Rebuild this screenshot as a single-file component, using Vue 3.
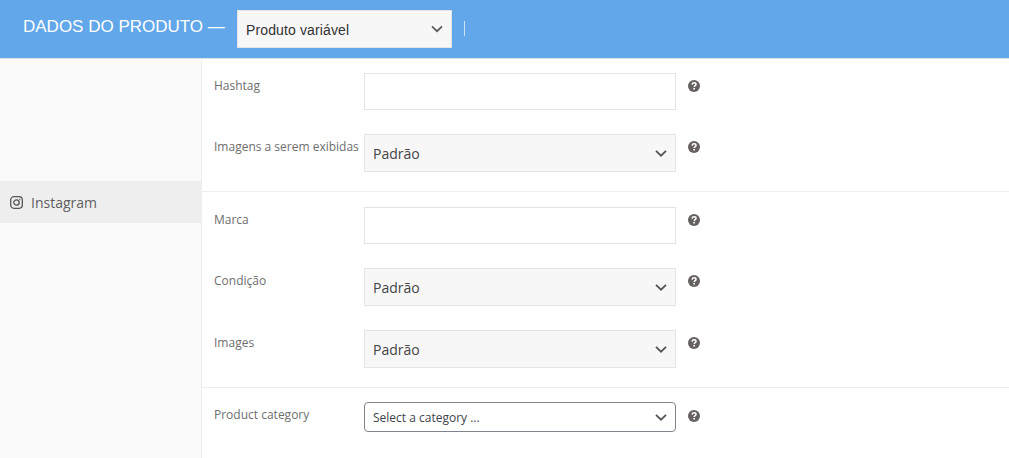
<script setup>
const groups = [
  [
    { label: 'Hashtag', type: 'input' },
    { label: 'Imagens a serem exibidas', type: 'select', value: 'Padrão' },
  ],
  [
    { label: 'Marca', type: 'input' },
    { label: 'Condição', type: 'select', value: 'Padrão' },
    { label: 'Images', type: 'select', value: 'Padrão' },
  ],
  [
    { label: 'Product category', type: 'category', value: 'Select a category ...' },
  ],
]
</script>

<template>
  <div class="page">
    <header class="bar">
      <span class="title">DADOS DO PRODUTO —</span>
      <div class="type-select">
        <span>Produto variável</span>
        <svg class="chev" width="12" height="8" viewBox="0 0 12 8"><path d="M1 1.4 6 6.2 11 1.4" fill="none" stroke="#5c5c5c" stroke-width="1.8"/></svg>
      </div>
      <span class="sep"></span>
    </header>
    <div class="body">
      <aside class="side">
        <div class="tab">
          <svg class="ig" width="13" height="13" viewBox="0 0 13 13" fill="none" stroke="#555" stroke-width="1.3">
            <rect x=".7" y=".7" width="11.6" height="11.6" rx="3.2"/>
            <circle cx="6.5" cy="6.5" r="2.7"/>
            <circle cx="9.8" cy="3.2" r=".4" fill="#555" stroke-width=".5"/>
          </svg>
          <span>Instagram</span>
        </div>
      </aside>
      <main class="form">
        <section v-for="(g, i) in groups" :key="i" class="group">
          <div v-for="r in g" :key="r.label" class="row" :class="r.type">
            <label class="label">{{ r.label }}</label>
            <div class="control">
              <template v-if="r.type !== 'input'">
                <span>{{ r.value }}</span>
                <svg class="chev" width="12" height="8" viewBox="0 0 12 8"><path d="M1 1.9 6 6.7 11 1.9" fill="none" stroke="#555" stroke-width="1.8"/></svg>
              </template>
            </div>
            <svg class="help" width="12" height="12" viewBox="0 0 12 12">
              <circle cx="6" cy="6" r="6" fill="#666060"/>
              <path d="M4.1 4.6C4.2 3.4 5 2.8 6.1 2.8 7.2 2.8 8 3.4 8 4.4 8 5.6 6.2 5.7 6.2 7" fill="none" stroke="#fff" stroke-width="1.5"/>
              <rect x="5.3" y="7.9" width="1.7" height="1.6" fill="#fff"/>
            </svg>
          </div>
        </section>
      </main>
    </div>
  </div>
</template>

<style>
html, body { margin: 0; background: #fff; }
</style>

<style scoped>
.page { width: 1009px; height: 458px; overflow: hidden; font-family: "Open Sans", sans-serif; background: #fff; }
.bar {
  height: 58px; box-sizing: content-box; background: #62a7ea; border-bottom: 1px solid #dfe3e6;
  display: flex; align-items: center; padding-left: 23px; font-family: "Liberation Sans", sans-serif;
}
.title { color: #fff; font-size: 17px; width: 214px; margin-top: -4px; white-space: nowrap; }
.type-select {
  width: 215px; height: 38px; box-sizing: border-box; background: #f7f7f7; border: 1px solid #e4e4e4;
  display: flex; align-items: center; justify-content: space-between; padding: 2px 8px 0; font-size: 14px; color: #333;
  letter-spacing: .13px; margin-top: -1px;
}
.type-select .chev { margin-top: -2px; }
.sep { width: 1px; height: 15px; background: #cfe2f6; margin-left: 12px; margin-top: -1px; }
.body { display: flex; height: 399px; }
.side { width: 201px; background: #fafafa; border-right: 1px solid #eee; padding-top: 122px; flex: none; }
.tab {
  height: 42px; background: #eee; display: flex; align-items: center; gap: 8px; padding-left: 10px;
  font-size: 14px; color: #5f5f5f;
}
.tab span { padding-top: 1px; }
.form { flex: 1; }
.group { padding: 14px 0 19px; display: flex; flex-direction: column; gap: 24px; border-bottom: 1px solid #eee; }
.group:nth-child(2) { padding-top: 15px; }
.group:last-child { border-bottom: 0; }
.row { display: flex; align-items: flex-start; padding-left: 12px; }
.label { width: 150px; flex: none; font-size: 12px; color: #6e6e6e; line-height: 16px; padding-top: 5px; white-space: nowrap; }
.control {
  width: 312px; height: 38px; box-sizing: border-box; border: 1px solid #e4e4e4; background: #f7f7f7;
  display: flex; align-items: center; justify-content: space-between; padding: 0 8px;
  font-size: 14px; color: #444;
}
.input .control { background: #fff; height: 37px; }
.category .control { height: 30px; border: 1px solid #7e858c; border-radius: 4px; background: #fff; font-size: 12px; color: #3c434a; }
.help { margin: 7px 0 0 12px; flex: none; }
.category .help { margin-top: 8px; }
</style>
